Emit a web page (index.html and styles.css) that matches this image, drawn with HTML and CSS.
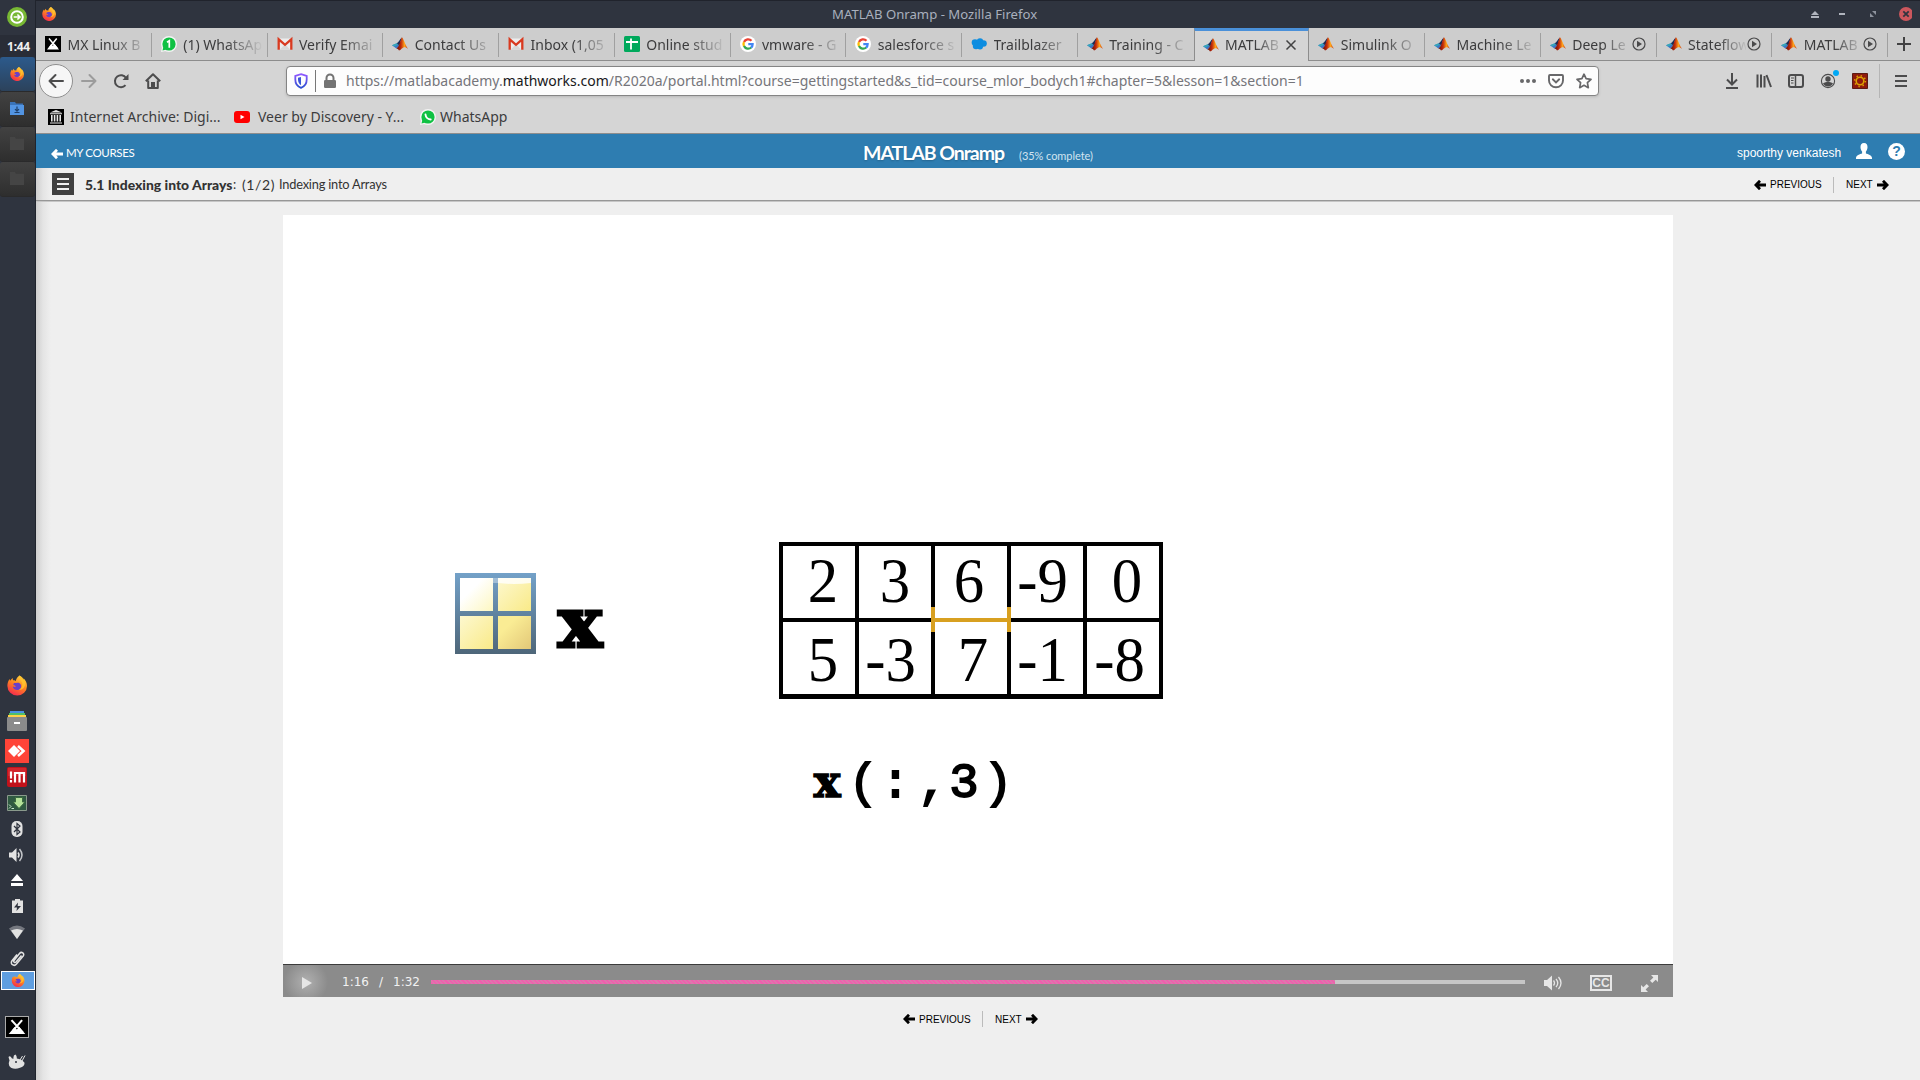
FILE: index.html
```
<!DOCTYPE html>
<html lang="en">
<head>
<meta charset="utf-8">
<title>MATLAB Onramp - Mozilla Firefox</title>
<link rel="stylesheet" href="styles.css">
</head>
<body>
<svg width="0" height="0" class="defs" aria-hidden="true">
  <defs>
    <linearGradient id="ffg" x1="0.8" y1="0" x2="0.3" y2="1"><stop offset="0" stop-color="#ffe14a"/><stop offset=".45" stop-color="#ff8a1e"/><stop offset="1" stop-color="#f5274f"/></linearGradient>
    <linearGradient id="mlg" x1="0" y1="0" x2="1" y2="0"><stop offset="0" stop-color="#5a0c08"/><stop offset=".4" stop-color="#c22a0c"/><stop offset=".7" stop-color="#ffa21a"/><stop offset="1" stop-color="#c8320e"/></linearGradient>
    <linearGradient id="frame" x1="0" y1="0" x2="0" y2="1"><stop offset="0" stop-color="#73a1c8"/><stop offset="1" stop-color="#4e6679"/></linearGradient>
    <linearGradient id="pane-light" x1="0" y1="0" x2="1" y2="1"><stop offset=".35" stop-color="#ffffff"/><stop offset="1" stop-color="#fdf7c0"/></linearGradient>
    <linearGradient id="pane-mid" x1="0" y1="0" x2="1" y2="1"><stop offset="0" stop-color="#fdf8cf"/><stop offset="1" stop-color="#f9ea88"/></linearGradient>
    <linearGradient id="pane-dark" x1="0" y1="0" x2="1" y2="1"><stop offset=".3" stop-color="#faec94"/><stop offset="1" stop-color="#e3c878"/></linearGradient>
    <linearGradient id="shield" x1="0" y1="0" x2="0" y2="1"><stop offset="0" stop-color="#9059ff"/><stop offset="1" stop-color="#2b4fd0"/></linearGradient>
  </defs>
  <symbol id="firefox" viewBox="0 0 20 20"><path fill="url(#ffg)" d="M12.6 0c2.7 1.5 3.2 3.3 3.6 4.4.6-.3.5-1.2.4-1.6C18.700 4.800 20 7.600 20 10.500a9.800 9.600 0 0 1-19.600 0C.3 7.500 1.400 5 2.700 3.400L3 5.200 5.600 2.500 6 4.800c1 0 2 .1 2.800.6C9.300 3 10.600 1 12.600 0z"/><path fill="#6b3fc9" d="M7 7.500c2 .3 3.600-.8 5.600.2 2.300 1.500 2 5.100-.2 6.300-2.800 1.500-6.600-.3-6.600-3.300 1 1 2.200 1 3.200.1L6.200 9.300z"/><path fill="#ffc22e" d="M12.600 0c-2 2.500 2.400 4.700 2.700 8.400.3 2.500-1.300 5.100-3.800 6 4.200.2 7.100-3 6.700-7.200C17.900 3.800 14.800 1.600 12.600 0z" opacity=".85"/></symbol>
  <symbol id="matlab" viewBox="0 0 16 16"><path fill="#3c78c8" d="M0 9.200 4.800 7.200 7.400 9.700 4.400 12.400z"/><path fill="#35a8b8" d="M0 9.200 4.800 7.200 6 8.400 2.400 10.500z"/><path fill="#1c2d58" d="M4.800 7.200C6.600 6.600 7.800 3.200 9.800 1.600L7.400 9.700z"/><path fill="url(#mlg)" d="M9.900 1.200C11.300 2 13.200 8.800 16 12.800 13.700 10.900 12 10.300 9.500 12.800 8.700 13.700 7.800 14.500 7 14.500 6.500 13 5.400 12.600 4.400 12.400 7.500 10.700 8.300 4 9.900 1.200z"/></symbol>
  <symbol id="gmail" viewBox="0 0 16 16"><path fill="#ededed" d="M1 2.500h14v11H1z"/><path fill="#d8d8d8" d="M3 13.500 8 8l5 5.500z"/><path fill="none" stroke="#d93a20" stroke-width="2.300" d="M1.700 13.800V3.300L8 8.800l6.300-5.500v10.500"/></symbol>
  <symbol id="google" viewBox="0 0 16 16"><circle cx="8" cy="8" r="8" fill="#fff"/><g fill="none" stroke-width="2.300"><path stroke="#ea4335" d="M11.500 4.700A4.600 4.600 0 0 0 4 6"/><path stroke="#fbbc05" d="M4 5.900a4.600 4.600 0 0 0 0 4.200"/><path stroke="#34a853" d="M4 10a4.600 4.600 0 0 0 7.200 1.500"/><path stroke="#4285f4" d="M11.100 11.600A4.600 4.600 0 0 0 12.600 8.200H8.300"/></g></symbol>
  <symbol id="mx" viewBox="0 0 16 16"><path d="M0 0h16v16H0z"/><path fill="#fff" d="M2 13.500 6.200 8l1.700 2 1.700-2.200 4.400 5.700z"/><path stroke="#fff" stroke-width="1.500" d="m4 2.500 8.300 10M11.700 2.500 5 11"/></symbol>
  <symbol id="sound" viewBox="0 0 16 16"><circle cx="8" cy="8" r="6" fill="none" stroke="#4a4a4b" stroke-width="1.200"/><path fill="#4a4a4b" d="M6 4.700 11 8l-5 3.300z"/></symbol>
  <symbol id="left" viewBox="0 0 12 10"><path fill="none" stroke="currentColor" stroke-width="2.800" d="M12 5H2M6 .8 1.900 5 6 9.200"/></symbol>
  <symbol id="right" viewBox="0 0 12 10"><path fill="none" stroke="currentColor" stroke-width="2.800" d="M0 5h10M6 .8 10.100 5 6 9.200"/></symbol>
</svg>

<div class="desktop">
  <aside class="panel">
    <div class="launcher"><svg width="20" height="20" viewBox="0 0 20 20"><circle cx="10" cy="10" r="10" fill="#78b834"/><circle cx="10" cy="10" r="5.800" fill="none" stroke="#fff" stroke-width="2"/><path fill="none" stroke="#fff" stroke-width="1.600" d="M6.700 10h6M10.400 7.500l2.600 2.500-2.600 2.500"/></svg></div>
    <div class="clock">1:44</div>
    <div class="task task-on"><svg width="14" height="14"><use href="#firefox"/></svg></div>
    <div class="task"><svg width="14" height="13" viewBox="0 0 14 13"><path fill="#3a73b8" d="M0 0h5l1 1.500h7V4H0z"/><path fill="#5294e2" d="M0 3h14v10H0z"/><path fill="none" stroke="#1f406b" stroke-width="1.200" d="M7 4.500V9M5 7.200l2 2 2-2M4.500 10.500h5"/></svg></div>
    <div class="task"><svg width="14" height="13" viewBox="0 0 14 13"><path fill="#454545" d="M0 0h5l1 1.800h8V13H0z"/></svg></div>
    <div class="task"><svg width="14" height="13" viewBox="0 0 14 13"><path fill="#454545" d="M0 0h5l1 1.800h8V13H0z"/></svg></div>
    <div class="tray">
      <div class="h36"><svg width="20" height="21"><use href="#firefox"/></svg></div>
      <div class="h36"><svg width="20" height="20" viewBox="0 0 20 20"><path fill="#4a90e2" d="M3 0h14v3H3z"/><path fill="#4fbf67" d="M2 2h16v3H2z"/><path fill="#ffd147" d="M1 4h18v3H1z"/><rect y="6" width="20" height="14" rx="1" fill="#8b8b8b"/><path fill="#fff" d="M7 11h6v2H7z"/></svg></div>
      <div class="h24"><svg width="24" height="24" viewBox="0 0 24 24"><path fill="#ff4438" d="M0 0h24v24H0z"/><path fill="#fff" d="m3 12 6-6 6 6-6 6z"/><path fill="none" stroke="#fff" stroke-width="2.600" d="m13 7 5.500 5-5.500 5"/></svg></div>
      <div class="h28"><svg width="20" height="20" viewBox="0 0 20 20"><rect width="20" height="20" rx="2" fill="#c1121b"/><path fill="#e33a40" d="M1 1h18v8H1z" opacity=".5"/><path fill="none" stroke="#fff" stroke-width="2.200" d="M4 4.500v7M4 13v2.500M8 15.500V6h9v9.500M12.500 6v9.500"/></svg></div>
      <div class="h24"><svg width="20" height="16" viewBox="0 0 20 16"><path fill="#2f5a41" stroke="#8a9a8c" d="M.5.500h19v15H.5z"/><path fill="#b5e39a" stroke="#3c6b40" d="M8.500 2.500h7V7H18l-6 6.500L6 7h2.500z"/><path stroke="#cde8cf" fill="none" d="m2 9.500 2 2-2 2M4.500 13.500H7"/></svg></div>
      <div class="h28"><svg width="12" height="16" viewBox="0 0 12 16"><rect x=".5" width="11" height="16" rx="5" fill="#e2e2e2"/><path fill="none" stroke="#30343f" stroke-width="1.200" d="m3 5 6 6-3 2.500v-11L9 5l-6 6"/></svg></div>
      <div class="h24"><svg width="16" height="16" viewBox="0 0 16 16"><path fill="#e2e2e2" d="M0 5.500h3L7.500 1v14L3 10.500H0z"/><path fill="none" stroke="#e2e2e2" stroke-width="1.500" d="M9 5.500q2 2.500 0 5"/><path fill="none" stroke="#c4c6ca" stroke-width="1.500" d="M10.500 2q5 6 0 12"/></svg></div>
      <div class="h26"><svg width="12" height="12" viewBox="0 0 12 12"><path fill="#fff" d="m6 0 6 7H0zM0 9h12v3H0z"/></svg></div>
      <div class="h26"><svg width="11" height="14" viewBox="0 0 11 14"><path fill="#e2e2e2" d="M0 1.500h3V0h5v1.500h3V14H0z"/><path fill="#30343f" d="M6 3.500 2 8.500h3l-.5 3.500L9 7H5.700z"/></svg></div>
      <div class="h26"><svg width="16" height="14" viewBox="0 0 16 14"><path fill="#74777f" d="M0 3.500q8-6 16 0L8 14z"/><path fill="#e2e2e2" d="M2 5.500q6-3 12 0L8 14z"/></svg></div>
      <div class="h26"><svg width="15" height="17" viewBox="0 0 15 17"><path fill="none" stroke="#e2e2e2" stroke-width="1.500" d="M11.500 5.500 6 12c-1.200 1.300-3-.2-2-1.500L9.500 3.500c2-2.500 5.500 0 3.700 2.500L6.500 14c-2.500 3-6.800 0-4.500-3.200L7 4.500"/></svg></div>
      <div class="switcher"><svg width="14" height="13"><use href="#firefox"/></svg></div>
      <div class="mx"><svg width="22" height="20" viewBox="0 0 16 16" preserveAspectRatio="none"><use href="#mx"/></svg></div>
      <div class="mouse"><svg width="18" height="15" viewBox="0 0 18 15"><path fill="#e2e2e2" d="M.5 3Q2 1 4 4.500l1.500.3Q5 .8 7.500.5 9 2 8.800 4.500q4.700.3 7.700 4.300.3 3.200-4.500 5-5 1.800-9 0Q-.5 11.500 1.500 6.500z"/><path stroke="#e2e2e2" d="m12 6 2.500-4M14 7l3-5.500"/><circle cx="8" cy="8" r="1" fill="#30343f"/></svg></div>
    </div>
  </aside>

  <main class="window">
    <header class="titlebar">
      <svg class="app-icon" width="14" height="14"><use href="#firefox"/></svg>
      <span class="win-title">MATLAB Onramp - Mozilla Firefox</span>
      <svg class="win-buttons" width="104" height="27" viewBox="0 0 104 27"><path fill="#b0b4bd" d="m7 10 4 4H3zM3 15h8v2H3zM31 12h6v2h-6z"/><path fill="#8d929d" d="M64 10h4v4zM62 12v4h4z"/><circle cx="98" cy="13" r="7" fill="#cc575d"/><path stroke="#2f343f" stroke-width="1.800" d="m95.300 10.300 5.400 5.400m0-5.400-5.400 5.400"/></svg>
    </header>

    <nav class="tabs">
      <div class="tab"><svg><use href="#mx"/></svg><span>MX Linux B</span></div>
      <div class="tab"><svg viewBox="0 0 16 16"><circle cx="8" cy="8" r="8" fill="#f4f4f4"/><path fill="#f4f4f4" d="M0 16 1 11l4 4z"/><circle cx="8" cy="8" r="6.600" fill="#0fc143"/><path fill="#0fc143" d="m1.500 14.500 1-4 3 3z"/><path fill="none" stroke="#fff" stroke-width="1.700" d="M6 6.200 8.300 4.700v7"/></svg><span>(1) WhatsAp</span></div>
      <div class="tab"><svg><use href="#gmail"/></svg><span>Verify Emai</span></div>
      <div class="tab"><svg><use href="#matlab"/></svg><span>Contact Us</span></div>
      <div class="tab"><svg><use href="#gmail"/></svg><span>Inbox (1,05</span></div>
      <div class="tab"><svg viewBox="0 0 16 16"><rect width="16" height="16" rx="1.500" fill="#00a95c"/><path stroke="#fff" stroke-width="1.800" d="M2 6h12M7 2.500v11"/></svg><span>Online stud</span></div>
      <div class="tab"><svg><use href="#google"/></svg><span>vmware - G</span></div>
      <div class="tab"><svg><use href="#google"/></svg><span>salesforce s</span></div>
      <div class="tab"><svg viewBox="0 0 16 16"><g fill="#0d8de0"><circle cx="4" cy="6.500" r="3.300"/><circle cx="9" cy="5.500" r="3.200"/><circle cx="12.500" cy="7.500" r="3.300"/><circle cx="5" cy="10" r="3.200"/><circle cx="9" cy="10.500" r="3"/></g></svg><span>Trailblazer</span></div>
      <div class="tab last-before"><svg><use href="#matlab"/></svg><span>Training - C</span></div>
      <div class="tab active"><svg><use href="#matlab"/></svg><span>MATLAB</span><svg class="tab-end" viewBox="0 0 16 16"><path stroke="#424243" stroke-width="1.500" d="m3.500 3.500 9 9m0-9-9 9"/></svg></div>
      <div class="tab"><svg><use href="#matlab"/></svg><span>Simulink O</span></div>
      <div class="tab"><svg><use href="#matlab"/></svg><span>Machine Le</span></div>
      <div class="tab"><svg><use href="#matlab"/></svg><span>Deep Le</span><svg class="tab-end"><use href="#sound"/></svg></div>
      <div class="tab"><svg><use href="#matlab"/></svg><span>Stateflow</span><svg class="tab-end"><use href="#sound"/></svg></div>
      <div class="tab"><svg><use href="#matlab"/></svg><span>MATLAB</span><svg class="tab-end"><use href="#sound"/></svg></div>
      <div class="new-tab"><svg width="16" height="16" viewBox="0 0 16 16"><path stroke="#424243" stroke-width="2" d="M8 1v14M1 8h14"/></svg></div>
    </nav>

    <div class="toolbar">
      <div class="nav-buttons">
        <div class="back"><svg width="16" height="16" viewBox="0 0 16 16"><path fill="none" stroke="#4c4c4d" stroke-width="2" stroke-linecap="round" stroke-linejoin="round" d="M15 8H1.500M7.500 2l-6 6 6 6"/></svg></div>
        <svg width="16" height="16" viewBox="0 0 16 16"><path fill="none" stroke="#9c9c9c" stroke-width="2" stroke-linecap="round" stroke-linejoin="round" d="M1 8h13.500M8.500 2l6 6-6 6"/></svg>
        <svg width="16" height="16" viewBox="0 0 16 16"><path fill="none" stroke="#4c4c4d" stroke-width="2" d="M12.500 12.200A6 6 0 1 1 13 5"/><path fill="#4c4c4d" d="M15.500 1v6H9.500z"/></svg>
        <svg width="16" height="16" viewBox="0 0 16 16"><path fill="none" stroke="#4c4c4d" stroke-width="2" stroke-linejoin="round" d="M.8 8.300 8 1.200l7.200 7.100M3.200 7.500V15h9.600V7.500"/><path fill="#4c4c4d" d="M6 9h4v6H6z"/></svg>
      </div>
      <div class="urlbar">
        <svg class="shield" width="16" height="16" viewBox="0 0 16 16"><path fill="none" stroke="url(#shield)" stroke-width="1.800" d="M8 1.200 13.700 3v3.500c0 4-2.200 7-5.700 8.300-3.500-1.300-5.700-4.300-5.700-8.300V3z"/><path fill="#3a55d8" d="M8 4v8.300C6 11 5 9 5 6.500v-1.700z"/></svg>
        <i class="url-sep"></i>
        <svg class="lock" width="14" height="16" viewBox="0 0 14 16"><path fill="none" stroke="#737373" stroke-width="2" d="M3.500 7.500V5a3.500 3.500 0 0 1 7 0v2.500"/><rect x="1" y="7" width="12" height="8" rx="1.200" fill="#737373"/></svg>
        <span class="url">https://matlabacademy.<b>mathworks.com</b>/R2020a/portal.html?course=gettingstarted&amp;s_tid=course_mlor_bodych1#chapter=5&amp;lesson=1&amp;section=1</span>
        <span class="url-actions">
          <svg width="16" height="16" viewBox="0 0 16 16" fill="#68686a"><circle cx="2" cy="8" r="2"/><circle cx="8" cy="8" r="2"/><circle cx="14" cy="8" r="2"/></svg>
          <svg width="16" height="16" viewBox="0 0 16 16" fill="none" stroke="#68686a" stroke-width="1.900" stroke-linecap="round"><path d="M2 2h12q1 0 1 1v4.500a7 6.800 0 0 1-14 0V3q0-1 1-1z"/><path d="M4.800 6.300 8 9.400l3.200-3.100"/></svg>
          <svg width="16" height="16" viewBox="0 0 16 16" fill="none" stroke="#68686a" stroke-width="1.700" stroke-linejoin="round"><path d="m8 1.200 2.100 4.500 4.900.6-3.600 3.400.9 5L8 12.300l-4.300 2.400.9-5L1 6.300l4.900-.6z"/></svg>
        </span>
      </div>
      <div class="tools">
        <svg width="16" height="16" viewBox="0 0 16 16" fill="none" stroke="#4c4c4d" stroke-width="2"><path d="M8 0v11M3 6.500l5 5 5-5M2 15h12"/></svg>
        <svg width="16" height="16" viewBox="0 0 16 16" fill="none" stroke="#4c4c4d" stroke-width="2"><path d="M1.500 1.500v13M5 1.500v13M8.500 3v11.500M10.500 2l4.500 12"/></svg>
        <svg width="16" height="16" viewBox="0 0 16 16" fill="none" stroke="#4c4c4d"><rect x="1" y="2" width="14" height="12" rx="2" stroke-width="2"/><path d="M7.500 2v12" stroke-width="1.500"/><path d="M3 5h3M3 7.500h2.500M3 10h2.500"/></svg>
        <div class="account"><svg width="16" height="16" viewBox="0 0 16 16"><circle cx="8" cy="8" r="6.600" fill="none" stroke="#4c4c4d" stroke-width="1.100"/><circle cx="8" cy="6" r="2.700" fill="#4c4c4d"/><path fill="#4c4c4d" d="M3 10.300q5-3 10 0-1.800 3.200-5 3.200t-5-3.200z"/></svg><i></i></div>
        <svg width="16" height="16" viewBox="0 0 16 16"><path fill="#8f1a0c" stroke="#5e1a12" d="M.5.500h15v15H.5z"/><circle cx="8" cy="8" r="3.800" fill="none" stroke="#dfa300" stroke-width="1.600"/><circle cx="8" cy="8" r="5.400" fill="none" stroke="#dfa300" stroke-width="1.500" stroke-dasharray="1.400 2.840"/></svg>
      </div>
      <div class="menu"><svg width="14" height="14" viewBox="0 0 14 14"><path stroke="#4c4c4d" stroke-width="2" d="M1 2h12M1 7h12M1 12h12"/></svg></div>
    </div>

    <div class="bookmarks">
      <svg width="16" height="16" viewBox="0 0 16 16"><path d="M0 0h16v16H0z"/><path fill="#e8e8e8" d="m8 1 6 2.500H2zM2 4.300h12v1H2zM3 6h1.600v6.500H3zM5.800 6h1.600v6.500H5.800zM8.600 6h1.600v6.500H8.600zM11.400 6H13v6.500h-1.600zM2 13.500h12v1H2z"/></svg><span class="bm1">Internet Archive: Digi...</span>
      <svg width="16" height="16" viewBox="0 0 16 16"><rect y="2" width="16" height="12" rx="3" fill="#f00"/><path fill="#fff" d="m6.500 5.700 4 2.300-4 2.300z"/></svg><span class="bm2">Veer by Discovery - Y...</span>
      <svg width="16" height="16" viewBox="0 0 16 16"><circle cx="8" cy="8" r="8" fill="#f4f4f4"/><path fill="#f4f4f4" d="m0 16 1-5 4 4z"/><circle cx="8" cy="8" r="6.600" fill="#0fc143"/><path fill="#0fc143" d="m1.500 14.500 1-4 3 3z"/><path fill="none" stroke="#fff" stroke-width="1.900" stroke-linecap="round" d="M5.500 5.500q.5 4.500 5.200 5"/></svg><span>WhatsApp</span>
    </div>

    <section class="page">
      <div class="course-bar">
        <a class="courses"><svg width="12" height="10"><use href="#left"/></svg><span>MY COURSES</span></a>
        <div class="course"><strong>MATLAB Onramp</strong><small>(35% complete)</small></div>
        <div class="user"><span>spoorthy venkatesh</span>
          <svg width="16" height="17" viewBox="0 0 16 17"><path fill="#fff" d="M8 0c2.500 0 3.700 1.800 3.500 4.500C11.300 6.500 10.500 8 9.900 8.600v1.900c2 .8 6.100 1.500 6.100 4.500V16H0v-1c0-3 4-3.700 6.100-4.500V8.600C5.500 8 4.700 6.500 4.500 4.500 4.300 1.800 5.500 0 8 0z"/></svg>
          <em>?</em></div>
      </div>
      <div class="lesson-bar">
        <div class="burger"><i></i><i></i><i></i></div>
        <b class="chapter">5.1 Indexing into Arrays</b><span class="colon">:</span><span class="count">(1/2)</span><span class="lesson">Indexing into Arrays</span>
        <div class="pager top"><svg width="12" height="10"><use href="#left"/></svg><span class="prev">PREVIOUS</span><i></i><span class="next">NEXT</span><svg width="12" height="10"><use href="#right"/></svg></div>
      </div>

      <div class="video">
        <div class="stage">
          <div class="variable">
            <svg width="81" height="81" viewBox="0 0 81 81"><path fill="url(#frame)" d="M0 0h81v81H0z"/><path fill="url(#pane-light)" d="M5 5h33v33H5z"/><path fill="url(#pane-mid)" d="M43 5h33v33H43z"/><path fill="url(#pane-mid)" d="M5 43h33v33H5z"/><path fill="url(#pane-dark)" d="M43 43h33v33H43z"/><path fill="#fff" opacity=".8" d="M43 5h33v5q-17 2-33 0z"/><path fill="#fff" opacity=".35" d="M38 5h5v5h-5z"/></svg>
            <span class="var-name">x</span>
          </div>
          <div class="demo">
            <div class="matrix">
              <div><span class="c1">2</span></div><div><span class="c2">3</span></div><div><span class="c3">6</span></div><div><span class="c4">-9</span></div><div><span class="c5">0</span></div>
              <div><span class="c1">5</span></div><div><span class="c6">-3</span></div><div><span class="c7">7</span></div><div><span class="c4">-1</span></div><div><span class="c8">-8</span></div>
              <i class="marker"></i>
            </div>
            <div class="code"><span class="cx">x</span><span class="open">(</span><span>:</span><span class="comma">,</span><span>3</span><span>)</span></div>
          </div>
        </div>
        <div class="controls">
          <div class="play"><svg width="10" height="12" viewBox="0 0 10 12"><path fill="#e6e6e6" d="m0 0 10 6-10 6z"/></svg></div>
          <div class="time"><span>1:16</span><span>/</span><span>1:32</span></div>
          <div class="track"><div class="played" style="width:82.600%"></div></div>
          <svg class="vol" width="18" height="16" viewBox="0 0 18 16"><path fill="#e6e6e6" d="M0 5h3l5-4.500v15L3 11H0z"/><path fill="none" stroke="#e6e6e6" stroke-width="1.300" d="M9.500 5.500q2 2.500 0 5M12 3.800q3.500 4.200 0 8.400M14.500 2q5 6 0 12"/></svg>
          <span class="cc">CC</span>
          <svg class="full" width="17" height="17" viewBox="0 0 17 17"><path fill="#e6e6e6" d="M10 0h7v7l-2.300-2.300-3.400 3.400L9 5.800l3.400-3.400zM0 10l2.300 2.300L5.700 9 8 11.200l-3.400 3.400L7 17H0z"/></svg>
        </div>
      </div>
      <div class="pager bottom"><svg width="12" height="10"><use href="#left"/></svg><span class="prev">PREVIOUS</span><i></i><span class="next">NEXT</span><svg width="12" height="10"><use href="#right"/></svg></div>
    </section>
  </main>
</div>
</body>
</html>
```
FILE: styles.css
```
* { box-sizing: border-box; }
body { margin: 0; width: 1920px; height: 1080px; overflow: hidden; font-family: "Noto Sans", sans-serif; }
svg { display: block; flex: none; }
.defs { position: absolute; }
.desktop { display: flex; height: 1080px; }

/* desktop panel */
.panel { width: 36px; flex: none; background: #2f343f; display: flex; flex-direction: column; border-right: 1px solid #20242d; }
.panel > div, .tray > div { display: flex; align-items: center; justify-content: center; flex: none; }
.launcher { height: 35px; padding: 0 1px 1px 0; }
.clock { height: 22px; background: #292d37; color: #f0f0f0; font: bold 12px "Noto Sans", sans-serif; letter-spacing: -.3px; padding: 0 0 0 2px; }
.task { height: 35px; background: linear-gradient(#424242, #2e2e2e); border-radius: 3px; border-bottom: 1px solid #2a2a2b; padding: 0 2px 1px 0; }
.task-on { background: linear-gradient(#2c5a8c, #2c425b); }
.panel > .tray { margin-top: auto; flex-direction: column; height: 413px; justify-content: flex-start; padding-right: 1px; align-items: stretch; }
.h36 { height: 36px; } .h28 { height: 28px; } .h26 { height: 26px; } .h24 { height: 24px; }
.switcher { height: 19px; margin: 0 -1px 0 1px; background: #5f9ee0; border: 1px solid #fff; }
.mx { height: 22px; width: 24px; margin: 26px auto 0 5px; border: 1px solid #aaa; }
.mouse { height: 24px; margin-top: 11px; }

/* browser window */
.window { flex: 1; display: flex; flex-direction: column; background: #d5d5d5; min-width: 0; }
.titlebar { height: 28px; background: #2f343f; border-top: 1px solid #20232c; display: grid; grid-template-columns: 883px auto 1fr; align-items: center; color: #a9b0bd; font-size: 13.150px; padding: 0 0 1px 6px; }
.titlebar .app-icon, .titlebar .win-title { margin-top: -2px; }
.titlebar .win-title { margin-left: -93px; width: 210px; white-space: nowrap; }
.win-buttons { justify-self: end; margin-right: 8px; }

.tabs { height: 33px; display: flex; background: #cdcdcd; border-bottom: 1px solid #8d8d8d; }
.tab { width: 115.750px; height: 32px; flex: none; display: flex; align-items: center; padding-left: 9px; font-size: 14px; color: #3c3c3d; background: linear-gradient(#a0a0a0, #a0a0a0) right 5px / 1px 24px no-repeat; white-space: nowrap; }
.tab svg { width: 16px; height: 16px; }
.tab span { margin-left: 6.500px; flex: 1; min-width: 0; -webkit-mask: linear-gradient(90deg, #000 42px, #0005 68px, transparent 80px); mask: linear-gradient(90deg, #000 42px, #0005 68px, transparent 80px); }
.tab span:has(+ .tab-end) { -webkit-mask-image: linear-gradient(90deg, #000 30px, #0003 54px, transparent 60px); mask-image: linear-gradient(90deg, #000 30px, #0003 54px, transparent 60px); }
.tab .tab-end { margin-right: 10px; }
.tab.last-before { background: none; }
.tab.active { height: 33px; background: #d5d5d5; border-top: 3px solid #4a90d9; border-left: 1px solid #8d8d8d; border-right: 1px solid #8d8d8d; padding: 0 0 3px 8px; }
.tab.active .tab-end { margin-right: 9px; }
.new-tab { padding: 8px 0 0 8px; }

.toolbar { height: 40px; display: flex; align-items: center; }
.nav-buttons { display: flex; align-items: center; gap: 16px; width: 250px; padding-left: 3px; }
.back { width: 34px; height: 34px; border-radius: 50%; background: #f6f6f6; border: 1px solid #8f8f8f; display: flex; align-items: center; justify-content: center; margin-right: -8px; }
.urlbar { width: 1313px; height: 30px; background: #fdfdfd; border: 1px solid #848484; border-radius: 4px; box-shadow: 0 1px 3px #0002; display: flex; align-items: center; }
.shield { margin-left: 6px; }
.url-sep { width: 1px; height: 22px; background: #777; margin: 0 7px 0 6px; }
.url { margin: -2px 0 0 9px; font-size: 14px; color: #75757a; white-space: nowrap; flex: 1; }
.url b { font-weight: 400; color: #18181a; }
.url-actions { display: flex; gap: 12px; margin-right: 6px; }
.tools { display: flex; gap: 16px; margin-left: 125px; }
.account { position: relative; }
.account i { position: absolute; left: 13px; top: -3px; width: 6px; height: 6px; border-radius: 50%; background: #00a8f5; }
.menu { margin-left: 11px; height: 34px; border-left: 1px solid #b5b5b5; padding-left: 14px; display: flex; align-items: center; }
.bookmarks { height: 33px; display: flex; align-items: center; padding: 0 0 1px 12px; font-size: 14px; color: #3c3c3d; border-bottom: 1px solid #8d8d8d; white-space: nowrap; }
.bookmarks span { margin: -1px 0 0 6px; }
.bookmarks .bm1 { width: 150px; margin-right: 14px; }
.bookmarks .bm2 { width: 146px; margin: -1px 16px 0 8px; }
.bookmarks span:last-child { margin-left: 4px; }

/* course page */
.page { flex: 1; background: linear-gradient(90deg, #cfcfcf, #e4e4e4 7px, #efefef 15px); display: flex; flex-direction: column; }
.course-bar { height: 34px; background: #2e7db1; color: #fff; display: grid; grid-template-columns: 827px 1fr auto; align-items: center; font-family: Lato, sans-serif; }
.courses { display: flex; align-items: center; padding: 5px 0 0 15px; font-size: 11.500px; }
.courses span { margin: -2px 0 0 3px; width: 69px; letter-spacing: -.35px; white-space: nowrap; }
.course { display: flex; align-items: baseline; white-space: nowrap; padding-top: 2px; }
.course strong { font-weight: 700; font-size: 19.500px; width: 142px; text-shadow: 0 1px 2px #0003; letter-spacing: -1.050px; }
.course small { font-size: 11px; margin-left: 14px; color: #d2e4f0; letter-spacing: -.05px; }
.user { display: flex; align-items: center; font: 12px "Liberation Sans", Arial, sans-serif; }
.user span { width: 105px; margin-right: 14px; padding-top: 3px; white-space: nowrap; }
.user em { width: 17px; height: 17px; border-radius: 50%; background: #fff; color: #2e7db1; font: bold 14px/17px "Liberation Sans", sans-serif; text-align: center; margin: 1px 15px 0 16px; }
.lesson-bar { height: 34px; flex: none; border-bottom: 1px solid #c6c6c6; box-shadow: inset 0 -1px #979797; display: flex; align-items: center; padding-left: 16px; font-family: Lato, sans-serif; font-size: 12.800px; color: #333; white-space: nowrap; }
.lesson-bar > b, .lesson-bar > span { margin-top: -1px; }
.burger { width: 22px; height: 22px; background: #404040; display: flex; flex-direction: column; justify-content: center; gap: 3px; padding: 0 5px; margin-top: -1px; }
.burger i { height: 2px; background: #efefef; }
.lesson-bar > .chapter { margin-left: 11px; width: 148px; font-weight: 900; font-size: 13.900px; }
.colon { width: 9px; }
.count { width: 37px; font-size: 14px; letter-spacing: .6px; }
.lesson { width: 110px; letter-spacing: -.2px; }
.pager { display: flex; align-items: center; font: 10px "Liberation Sans", Arial, sans-serif; color: #000; white-space: nowrap; }
.pager i { width: 1px; height: 16px; background: #bbb; margin: 0 12px 0 11px; }
.pager .prev { margin-left: 4px; width: 52px; }
.pager .next { margin-right: 3px; width: 28px; }
.pager.top { margin-left: auto; margin-right: 31px; }
.pager.bottom { margin: 14px 0 0 867px; }

.video { width: 1390px; height: 782px; margin: 13px 0 0 247px; background: #fff; display: flex; flex-direction: column; }
.stage { height: 749px; display: flex; align-items: flex-start; padding-left: 172px; font-family: "Liberation Serif", serif; }
.variable { display: flex; margin-top: 358px; width: 324px; }
.var-name { font: bold 70px/71px "DejaVu Serif", serif; margin: 14px 0 0 22px; -webkit-text-stroke: 3px #000; transform: scaleX(1.06); transform-origin: left; }
.demo { margin-top: 327px; }
.matrix { position: relative; width: 384px; height: 157px; background: #000; border: 4px solid #000; border-bottom-width: 5px; display: grid; grid-template-columns: repeat(5, 1fr); grid-template-rows: 1fr 1fr; gap: 4px; }
.matrix div { background: #fff; font-size: 64px; line-height: 72px; height: 72px; white-space: nowrap; }
.matrix span { position: relative; top: -1px; display: inline-block; transform: scaleX(.95); transform-origin: center; }
.matrix div:nth-child(n+6) span { top: 2px; }
.c1 { margin-left: 24px; } .c2 { margin-left: 20px; } .c3 { margin-left: 18px; } .c4 { margin-left: 5px; } .c5 { margin-left: 24px; }
.c6 { margin-left: 5px; } .c7 { margin-left: 22px; } .c8 { margin-left: 6px; }
.marker { position: absolute; left: 148px; top: 61px; width: 80px; height: 25px; border: solid #d8a020; border-width: 0 4px; background: linear-gradient(#d8a020, #d8a020) center 11px / 100% 4px no-repeat; }
.code { display: grid; grid-template-columns: repeat(6, 34.200px); justify-items: center; align-items: baseline; font: 49px/60px "Liberation Mono", monospace; -webkit-text-stroke: 1.800px #000; margin: 53px 0 0 31px; }
.open { padding-left: 4px; }
.comma { padding-left: 6px; }
.cx { font: bold 45px/60px "DejaVu Serif", serif; -webkit-text-stroke: 1.500px #000; }

.controls { height: 33px; background: #8b8b8b; border-top: 1px solid #3c3c3c; display: flex; align-items: center; }
.play { width: 47px; height: 32px; padding: 3px 0 0 19px; display: flex; align-items: center; background: radial-gradient(circle at 23px 17px, #b0b0b0, #8b8b8b 22px); }
.time { display: flex; width: 101px; padding: 1px 0 0 12px; color: #f2f2f2; font: 12px "DejaVu Sans", sans-serif; white-space: nowrap; gap: 10px; }
.track { width: 1094px; height: 4px; background: #c6c6c6; margin-top: 2px; }
.played { height: 4px; background: repeating-linear-gradient(45deg, #ef5fae 0 1.500px, #dc78ac 1.500px 3px); }
.vol { margin: 3px 0 0 19px; }
.cc { width: 22px; height: 16px; margin: 4px 0 0 28px; border: 2px solid #e6e6e6; color: #e6e6e6; font: bold 12px/12px "Liberation Sans", sans-serif; text-align: center; }
.full { margin: 4px 0 0 29px; }
```
